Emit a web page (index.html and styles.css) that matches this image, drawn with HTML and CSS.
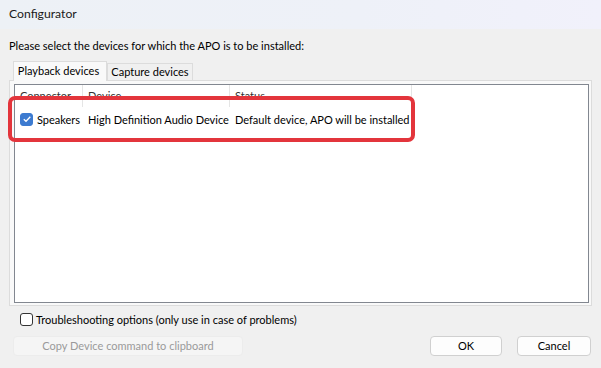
FILE: index.html
```html
<!DOCTYPE html>
<html>
<head>
<meta charset="utf-8">
<link rel="stylesheet" href="styles.css">
</head>
<body>
<div class="window">
  <div class="titlebar">Configurator</div>
  <div class="content">
    <div class="prompt">Please select the devices for which the APO is to be installed:</div>
    <div class="tabs">
      <div class="tab active">Playback devices</div>
      <div class="tab other">Capture devices</div>
    </div>
    <div class="panel">
      <div class="list">
        <div class="header">
          <div class="col c1">Connector</div>
          <div class="col c2">Device</div>
          <div class="col c3">Status</div>
        </div>
        <div class="row">
          <div class="col c1"><span class="check on"><svg width="10" height="10" viewBox="0 0 10 10"><path d="M1.8 5.2 L4 7.3 L8.3 2.8" fill="none" stroke="#fff" stroke-width="1.3"/></svg></span>Speakers</div>
          <div class="col c2">High Definition Audio Device</div>
          <div class="col c3">Default device, APO will be installed</div>
        </div>
        <div class="highlight"></div>
      </div>
    </div>
    <label class="option"><span class="check"></span>Troubleshooting options (only use in case of problems)</label>
    <div class="buttons">
      <div class="btn disabled">Copy Device command to clipboard</div>
      <div class="spacer"></div>
      <div class="btn ok">OK</div>
      <div class="btn cancel">Cancel</div>
    </div>
  </div>
</div>
</body>
</html>
```
FILE: styles.css
```css
* { box-sizing: border-box; }
html, body { margin: 0; padding: 0; }
body {
  width: 601px; height: 368px; overflow: hidden;
  background: #f0f0f0;
  font-family: Lato, "Noto Sans", sans-serif;
  font-size: 11px; color: #000;
}
.window { width: 601px; height: 368px; display: flex; flex-direction: column; }
.titlebar {
  height: 29px; padding-left: 9px; line-height: 28px;
  background: linear-gradient(90deg, #edf1f6, #eef1f8 60%, #f1f1fb);
  font-size: 12.2px; color: #1a1a1a;
}
.content { padding: 0 9px; display: flex; flex-direction: column; }
.prompt { margin-top: 9px; height: 16px; line-height: 16px; }
.tabs { display: flex; margin-top: 7px; padding-left: 4px; height: 19px; align-items: flex-end; position: relative; z-index: 2; }
.tab {
  height: 17px; line-height: 16px; text-align: center;
  border: 1px solid #dcdcdc; border-bottom: none; background: #f0f0f0;
}
.tab.active { width: 94px; height: 20px; line-height: 18px; background: #f9f9f9; margin-bottom: -1px; padding-right: 3px; }
.tab.other { width: 86px; }
.panel {
  height: 226px; border: 1px solid #dcdcdc; background: #f9f9f9;
  padding: 3px 2px 2px 4px; display: flex;
}
.list { flex: 1; border: 1px solid #828790; background: #fff; position: relative; }
.header { display: flex; height: 22px; }
.header .col { border-right: 1px solid #e5e5e5; line-height: 22px; padding-left: 5px; color: #333; }
.col { white-space: nowrap; overflow: hidden; }
.c1 { width: 68px; }
.c2 { width: 147px; }
.c3 { width: 182px; }
.row { display: flex; height: 22px; margin-top: 1px; align-items: center; }
.row .col { padding-left: 5px; display: flex; align-items: center; }
.check {
  width: 13px; height: 13px; border: 1px solid #3b3b3b; border-radius: 3px;
  display: inline-flex; align-items: center; justify-content: center; margin-right: 4px; flex: none; background: #fff;
}
.check.on { background: #3d7bd0; border-color: #3d7bd0; }
.highlight {
  position: absolute; left: -7px; top: 11px; width: 407px; height: 46px;
  border: 4px solid #e3353c; border-radius: 7px;
}
.option { display: flex; align-items: center; margin-top: 6px; margin-left: 11px; height: 14px; }
.option .check { margin-right: 3px; border-color: #333; }
.buttons { display: flex; margin-top: 10px; padding-left: 4px; padding-right: 1px; }
.btn {
  height: 20px; line-height: 18px; text-align: center;
  border: 1px solid #d0d0d0; border-radius: 4px; background: #fdfdfd;
}
.btn.disabled { width: 230px; color: #9a9a9a; background: #f5f5f5; border-color: #ececec; }
.spacer { flex: 1; }
.ok { width: 72px; }
.cancel { width: 74px; margin-left: 15px; }
```
